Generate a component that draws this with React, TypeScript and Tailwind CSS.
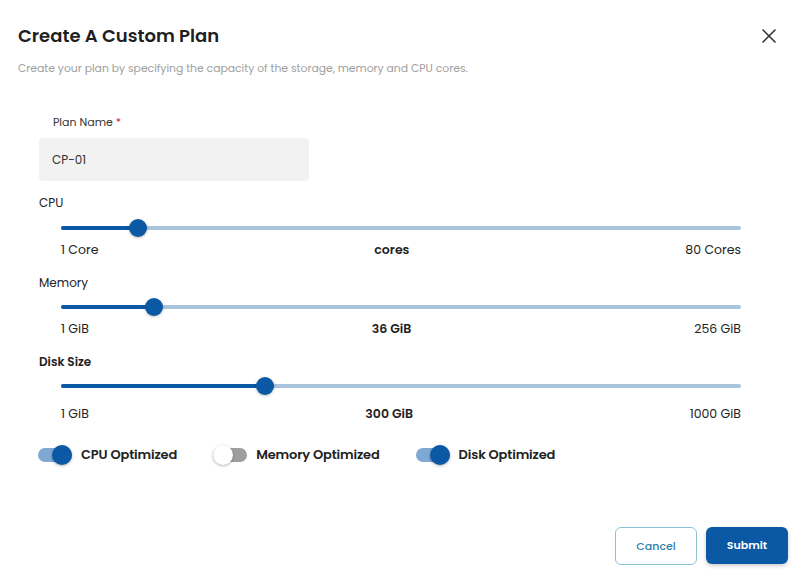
import { X } from "lucide-react";

const font = "font-['Poppins','Open_Sans','Liberation_Sans',sans-serif]";

interface RangeProps {
    value: number;
    min: number;
    max: number;
}

function Range({ value, min, max }: RangeProps) {
    const pct = ((value - min) / (max - min)) * 100;
    return (
        <div className="relative h-[20px] mx-[22px] flex items-center">
            <div className="w-full h-[4px] rounded-full bg-[#a9c4dc]" />
            <div className="absolute left-0 h-[4px] rounded-full bg-[#0b59a5]" style={{ width: `${pct}%` }} />
            <div
                className="absolute w-[18px] h-[18px] -ml-[9px] rounded-full bg-[#0b59a5] shadow-[0_1px_3px_rgba(0,0,0,0.25)]"
                style={{ left: `${pct}%` }}
            />
        </div>
    );
}

function Scale({ left, mid, right }: { left: string; mid: string; right: string }) {
    return (
        <div className="mx-[22px] flex justify-between text-[12.5px] leading-[18px] text-[#222]">
            <span>{left}</span>
            <span className="font-semibold">{mid}</span>
            <span>{right}</span>
        </div>
    );
}

function Toggle({ on, label }: { on: boolean; label: string }) {
    return (
        <div className="flex items-center gap-[9px]">
            <div className="relative w-[34px] h-[20px] flex items-center">
                <div className={`w-full h-[14px] rounded-full ${on ? "bg-[#7fa8d4]" : "bg-[#9e9e9e]"}`} />
                <div
                    className={`absolute w-[20px] h-[20px] rounded-full shadow-[0_1px_3px_rgba(0,0,0,0.3)] ${
                        on ? "right-0 bg-[#0b59a5]" : "left-0 bg-white"
                    }`}
                />
            </div>
            <span className="text-[13px] font-semibold text-[#222] tracking-[-0.15px]">{label}</span>
        </div>
    );
}

export default function App() {
    return (
        <div className={`${font} h-[579px] bg-white flex flex-col`}>
            <div className="flex justify-between items-center pl-[18px] pr-[19px] pt-[22px]">
                <h2 className="text-[18px] leading-[28px] font-semibold text-[#1f1f1f]">Create A Custom Plan</h2>
                <X size={24} strokeWidth={1.6} className="text-[#333]" />
            </div>
            <p className="px-[18px] mt-[11px] text-[10.8px] leading-[16px] text-[#9e9e9e]">
                Create your plan by specifying the capacity of the storage, memory and CPU cores.
            </p>

            <div className="pl-[39px] pr-[37px]">
                <label className="block mt-[37px] ml-[14px] text-[11px] leading-[16px] text-[#333]">
                    Plan Name <span className="text-[#c62828]">*</span>
                </label>
                <div className="mt-[8px] w-[270px] h-[43px] rounded-[4px] bg-[#f2f2f2] flex items-center px-[13px] text-[12px] text-[#333]">
                    CP-01
                </div>

                <div className="mt-[13px] text-[12px] leading-[18px] text-[#222]">CPU</div>
                <div className="mt-[6px]">
                    <Range value={10} min={1} max={80} />
                </div>
                <div className="mt-[3px]">
                    <Scale left="1 Core" mid="cores" right="80 Cores" />
                </div>

                <div className="mt-[15px] text-[12px] leading-[18px] text-[#222]">Memory</div>
                <div className="mt-[5px]">
                    <Range value={36} min={1} max={256} />
                </div>
                <div className="mt-[3px]">
                    <Scale left="1 GiB" mid="36 GiB" right="256 GiB" />
                </div>

                <div className="mt-[15px] text-[12px] leading-[18px] font-semibold text-[#222]">Disk Size</div>
                <div className="mt-[5px]">
                    <Range value={300} min={1} max={1000} />
                </div>
                <div className="mt-[9px]">
                    <Scale left="1 GiB" mid="300 GiB" right="1000 GiB" />
                </div>

                <div className="mt-[22px] flex items-center gap-[36px] -ml-px">
                    <Toggle on label="CPU Optimized" />
                    <Toggle on={false} label="Memory Optimized" />
                    <Toggle on label="Disk Optimized" />
                </div>
            </div>

            <div className="mt-auto pb-[14px] pr-[12px] flex justify-end gap-[9px]">
                <button className="w-[82px] h-[38px] rounded-[6px] border border-[#8cc0d6] text-[11px] text-[#2b7fab] font-medium">
                    Cancel
                </button>
                <button className="w-[82px] h-[37px] rounded-[6px] bg-[#0b59a5] text-[11px] text-white font-semibold shadow-[0_2px_4px_rgba(0,0,0,0.2)]">
                    Submit
                </button>
            </div>
        </div>
    );
}
